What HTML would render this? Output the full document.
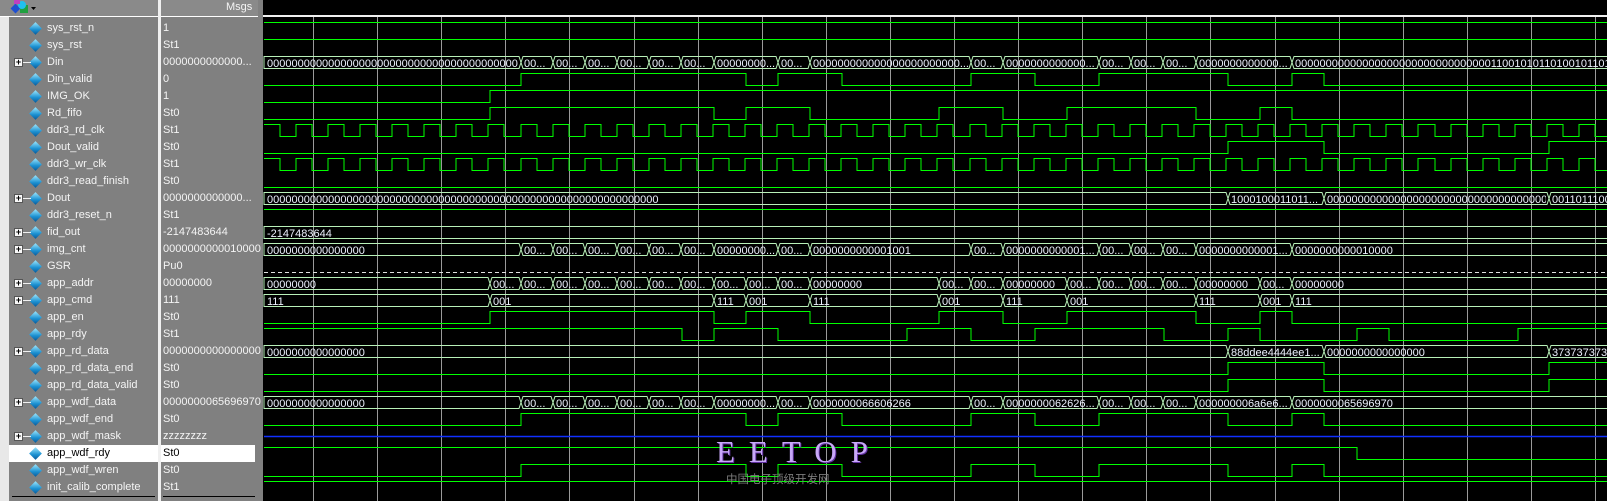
<!DOCTYPE html>
<html><head><meta charset="utf-8"><style>
body{margin:0;width:1607px;height:501px;background:#000;overflow:hidden;position:relative;font-family:"Liberation Sans",sans-serif}
#left{position:absolute;left:0;top:0;width:158px;height:501px;background:#808080}
#strip{position:absolute;left:0;top:17px;width:9px;height:484px;background:#e8e8e8}
#msgs{position:absolute;left:161px;top:0;width:97px;height:501px;background:#808080}
#sep1{position:absolute;left:158px;top:0;width:3px;height:501px;background:#f0f0f0}
#sep2{position:absolute;left:258px;top:0;width:5px;height:501px;background:#808080}
.hd{position:absolute;top:0;height:16px;background:#8a8a8a;border-bottom:1px solid #fff}
.nm{position:absolute;left:47px;font-size:11px;color:#f4f4f4;line-height:17px;white-space:nowrap}
.val{position:absolute;left:163px;font-size:11px;color:#f4f4f4;line-height:17px;white-space:nowrap}
.hl{position:absolute;left:9px;width:149px;height:17px;background:#fff}
.hl2{position:absolute;left:161px;width:94px;height:17px;background:#fff}
.dia{position:absolute;left:31px;width:9px;height:9px;transform:rotate(45deg);background:linear-gradient(135deg,#9ee8ff,#1a8fd0 60%,#0a5a9a)}
.plus{position:absolute;left:14px;width:7px;height:7px;border:1px solid #555;background:#f8f8f8;font-size:9px;line-height:7px;text-align:center;color:#000;font-weight:bold}
.pl{position:absolute;left:23px;width:8px;height:1px;background:#f0f0f0}
</style></head><body>
<div id="left"></div><div id="strip"></div><div id="sep1"></div><div id="msgs"></div><div id="sep2"></div>
<div class="hd" style="left:0;width:158px"></div>
<div class="hd" style="left:161px;width:97px"></div>
<div style="position:absolute;left:226px;top:1px;font-size:11px;color:#f4f4f4">Msgs</div>
<svg style="position:absolute;left:10px;top:0" width="26" height="15"><rect x="2" y="5" width="7" height="7" fill="#2050d0" transform="rotate(45 5.5 8.5)"/><rect x="10" y="5" width="8" height="8" fill="#20a040"/><circle cx="12" cy="5" r="4" fill="#20c0f0"/><rect x="4" y="0" width="6" height="4" fill="#c040c0"/><path d="M21 7h5l-2.5 3z" fill="#000"/></svg>
<div id="L"></div>
<div style="position:absolute;left:12px;top:496px;width:143px;height:1px;background:#000"></div>
<div style="position:absolute;left:163px;top:496px;width:92px;height:1px;background:#000"></div>
<svg id="W" style="position:absolute;left:0;top:0" width="1607" height="501"></svg>
<div style="position:absolute;left:716px;top:434px;font-family:'Liberation Serif',serif;font-size:31px;letter-spacing:14px;color:#c8a8f8;text-shadow:1px 1px 0 #6030a0">EETOP</div>
<div style="position:absolute;left:726px;top:471px;font-family:'Liberation Sans','Noto Sans CJK SC',sans-serif;font-size:11.5px;color:#7a7a7a">中国电子顶级开发网</div>
<script>
const rows=[
["sys_rst_n","1",0],["sys_rst","St1",0],["Din","0000000000000...",1],["Din_valid","0",0],["IMG_OK","1",0],["Rd_fifo","St0",0],
["ddr3_rd_clk","St1",0],["Dout_valid","St0",0],["ddr3_wr_clk","St1",0],["ddr3_read_finish","St0",0],["Dout","0000000000000...",1],
["ddr3_reset_n","St1",0],["fid_out","-2147483644",1],["img_cnt","0000000000010000",1],["GSR","Pu0",0],["app_addr","00000000",1],
["app_cmd","111",1],["app_en","St0",0],["app_rdy","St1",0],["app_rd_data","0000000000000000",1],["app_rd_data_end","St0",0],
["app_rd_data_valid","St0",0],["app_wdf_data","0000000065696970",1],["app_wdf_end","St0",0],["app_wdf_mask","zzzzzzzz",1],
["app_wdf_rdy","St0",0],["app_wdf_wren","St0",0],["init_calib_complete","St1",0]];
let h="";
rows.forEach((r,i)=>{const t=20+17*i;
 if(i==25)h+=`<div class="hl" style="top:${t}px"></div><div class="hl2" style="top:${t}px"></div>`;
 const c=i==25?"color:#000":"";
 h+=`<div class="dia" style="top:${t+4}px"></div><div class="nm" style="top:${t}px;${c}">${r[0]}</div><div class="val" style="top:${t}px;${c}">${r[1]}</div>`;
 if(r[2])h+=`<div class="plus" style="top:${t+4}px">+</div><div class="pl" style="top:${t+8}px"></div>`;
});
document.getElementById("L").innerHTML=h;
const X0=264,X1=1607,G="#00ff00",B="#b8f0b8";
let s=`<rect x="263" y="15" width="1344" height="2" fill="#f0f0f0"/>`;
for(let k=0;k<21;k++){const x=Math.round(313+64.1*k);s+=`<line x1="${x+.5}" y1="17" x2="${x+.5}" y2="501" stroke="#9a9a9a"/>`;}
function bit(i,init,tr){const hi=22+17*i+.5,lo=34+17*i+.5;let v=init,x=X0,d=`M${x} ${v?hi:lo}`;
 tr.forEach(t=>{d+=`H${t}`;v=!v;d+=`V${v?hi:lo}`;});d+=`H${X1}`;s+=`<path d="${d}" fill="none" stroke="${G}"/>`;}
function clk(i){const tr=[];for(let x=280;x<X1;x+=16.035)tr.push(Math.round(x));bit(i,1,tr);}
let cid=0;
function bus(i,segs){const t=22+17*i+.5,b=34+17*i+.5,m=28+17*i+.5;
 for(let k=0;k<segs.length;k++){const a=segs[k][0],e=k+1<segs.length?segs[k+1][0]:X1+4;const a2=k?a+2:a,e2=e-2;
  s+=`<path d="M${a} ${m}L${a2} ${t}H${e2}L${e} ${m}L${e2} ${b}H${a2}Z" fill="none" stroke="${B}"/>`;
  cid++;s+=`<clipPath id="c${cid}"><rect x="${a}" y="${t}" width="${Math.max(0,e-a-3)}" height="12"/></clipPath><text x="${a+3}" y="${b-1.5}" clip-path="url(#c${cid})" font-size="11" fill="#eef2ff" font-family="Liberation Sans,sans-serif">${segs[k][1]}</text>`;}}
const D="00...";
bit(0,1,[]);bit(1,1,[]);
bus(2,[[X0,"0000000000000000000000000000000000000000000..."],[521,D],[553,D],[585,D],[617,D],[649,D],[681,D],[714,"00000000..."],[778,D],[810,"000000000000000000000000..."],[971,D],[1003,"0000000000000..."],[1099,D],[1131,D],[1163,D],[1196,"0000000000000..."],[1292,"000000000000000000000000000000001100101011010010110110"]]);
bit(3,0,[521,746,778,842,971,1035,1099,1228,1292,1324]);
bit(4,0,[490]);
bit(5,0,[490,714,746,810,939,1003,1067,1196,1260,1292]);
clk(6);bit(7,0,[1228,1324,1549]);clk(8);bit(9,0,[]);
bus(10,[[X0,"0000000000000000000000000000000000000000000000000000000000000000"],[1228,"1000100011011..."],[1324,"0000000000000000000000000000000000000..."],[1549,"00110111001"]]);
bit(11,1,[]);bus(12,[[X0,"-2147483644"]]);
bus(13,[[X0,"0000000000000000"],[521,D],[553,D],[585,D],[617,D],[649,D],[681,D],[714,"00000000..."],[778,D],[810,"0000000000001001"],[971,D],[1003,"0000000000001..."],[1099,D],[1131,D],[1163,D],[1196,"0000000000001..."],[1292,"0000000000010000"]]);
s+=`<line x1="${X0}" y1="272.5" x2="${X1}" y2="272.5" stroke="#e0e0e0" stroke-dasharray="4 3"/>`;
bus(15,[[X0,"00000000"],[490,D],[521,D],[553,D],[585,D],[617,D],[649,D],[681,D],[714,D],[746,D],[778,D],[810,"00000000"],[939,D],[971,D],[1003,"00000000"],[1067,D],[1099,D],[1131,D],[1163,D],[1196,"00000000"],[1260,D],[1292,"00000000"]]);
bus(16,[[X0,"111"],[490,"001"],[714,"111"],[746,"001"],[810,"111"],[939,"001"],[1003,"111"],[1067,"001"],[1196,"111"],[1260,"001"],[1292,"111"]]);
bit(17,0,[490,714,746,810,939,1003,1067,1196,1260,1292]);
bit(18,1,[682,714,778,907,971,1035,1164,1228,1260,1357,1389,1518]);
bus(19,[[X0,"0000000000000000"],[1228,"88ddee4444ee1..."],[1324,"0000000000000000"],[1549,"3737373737373"]]);
bit(20,0,[1228,1324,1549]);bit(21,0,[1228,1324,1549]);
bus(22,[[X0,"0000000000000000"],[521,D],[553,D],[585,D],[617,D],[649,D],[681,D],[714,"00000000..."],[778,D],[810,"0000000066606266"],[971,D],[1003,"0000000062626..."],[1099,D],[1131,D],[1163,D],[1196,"000000006a6e6..."],[1292,"0000000065696970"]]);
bit(23,0,[521,746,778,842,971,1035,1099,1228,1292,1324]);
s+=`<line x1="${X0}" y1="436.5" x2="${X1}" y2="436.5" stroke="#1030ff" stroke-width="1.5"/>`;
bit(25,1,[1357]);
bit(26,0,[521,746,778,842,971,1035,1099,1228,1292,1324]);
bit(27,1,[]);
document.getElementById("W").innerHTML=s;
</script>
</body></html>
